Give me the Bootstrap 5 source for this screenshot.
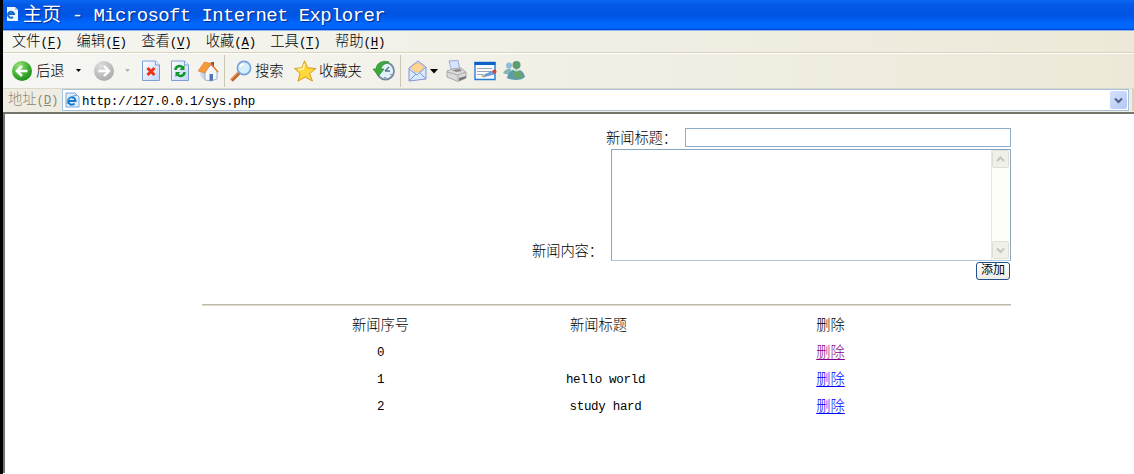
<!DOCTYPE html>
<html lang="zh-CN">
<head>
<meta charset="utf-8">
<title>主页</title>
<link href="https://cdn.jsdelivr.net/npm/bootstrap@5.3.0/dist/css/bootstrap.min.css" rel="stylesheet">
<style>
body{font-family:"Liberation Mono","Noto Sans CJK SC",monospace;font-size:14.3px;font-weight:300;line-height:20px;color:#000;background:#fff;height:474px;overflow:hidden}
.frame{border-left:3px solid #000;height:474px}
.en{font-family:"Liberation Mono",monospace;font-size:12.5px;letter-spacing:-.3px}
.titlebar{height:31px;padding-left:4px;color:#fff;background:linear-gradient(#0868f4 0,#0458e4 5px,#0054e3 15px,#0066fc 23px,#0067ff 28px,#0040c8 30px,#8db4ee 30px);font-size:19px;font-weight:400;text-shadow:1px 1px 1px #002a8c}
.titlebar .en{font-size:19px;letter-spacing:-.6px;white-space:pre}
.menus{height:22px;background:linear-gradient(90deg,#f5f5f1,#ece9d8);border-bottom:1px solid #d8d2bd;padding-left:9px;gap:14.2px;line-height:19px}
.menus>span{width:50.4px;padding-top:2px;white-space:nowrap}
.menus u{text-underline-offset:2px}
.tools{height:36px;background:linear-gradient(90deg,#f6f6f3,#ece9d8);border-top:1px solid #fff;border-bottom:1px solid #ddd9c9;padding-left:8px}
.tools svg,.tools span,.tools i{flex:none}
.tools span{line-height:20px;padding-top:1px;white-space:nowrap}
.sep{width:1px;height:32px;background:#c9c6b1}
.addr{height:23px;background:#efede2;padding-left:5px}
.addr label{width:54px;padding-top:2px;color:#8b897d;line-height:19px;white-space:nowrap;flex:none}
.url{height:22px;width:1067px;background:#fff;border:1px solid #a5c2dc;padding-left:2px;flex:none}
.drop{width:17px;height:18px;background:linear-gradient(135deg,#d5e1fc,#b4c8f6);border-radius:2px;margin-right:1px}
.grip{width:5px;height:22px;background:#fff;border-left:2px solid #d8d2bd;margin-left:3px}
.page-area{border-top:2px solid #77746b;border-left:2px solid #77746b;height:361px;padding:14px 0 0 197px}
.sheet{width:809px}
.caption-cell{width:80px;padding-left:1px;white-space:nowrap;letter-spacing:-.1px}
.title-in{width:326px;height:19px;border:1px solid #8eaccb;border-radius:0;padding:0 3px;background:#fff;outline:0;flex:none}
.box{width:400px;height:112px;border:1px solid #8aa5c0;border-bottom-color:#b4c6d9;flex:none}
.box textarea{border:0;resize:none;outline:0;overflow:hidden;background:#fff}
.scroller{width:19px;background:#fdfef8;border-left:1px solid #e8e8e2;flex:none}
.scroller svg{display:block}
.add{width:34px;height:18px;border:1px solid #24508a;border-radius:3px;background:linear-gradient(#fff,#ecebe4);font-size:12px;line-height:15px;padding:0;color:#000}
.rule{height:2px;background:linear-gradient(#bcb8aa 50%,#dfdbcf 50%);margin-top:24px}
.news{width:675px;margin:6px 0 0 66px;table-layout:fixed;text-align:center}
.news th,.news td{font-weight:300;padding:0;height:27.1px;line-height:20px;vertical-align:middle}
.news td.en{padding-top:1px}
.news a{color:#00f;text-underline-offset:2px;text-decoration-thickness:1px}
.news a.seen{color:#808}
</style>
</head>
<body>
<div class="frame">
  <header>
    <div class="titlebar d-flex align-items-center">
      <svg width="12" height="16" viewBox="0 0 12 16" style="margin-bottom:4px"><path d="M0 1h8l3 3v11H0z" fill="#eef5ff"/><path d="M8 1v3h3" fill="#a9c7ee"/><path d="M1 8h6a3 3 0 1 0-1 3" fill="none" stroke="#1769c8" stroke-width="2"/></svg>
      <span class="ms-1">主页</span><span class="en"> - Microsoft Internet Explorer</span>
    </div>
    <nav class="menus d-flex">
      <span>文件<span class="en">(<u>F</u>)</span></span><span>编辑<span class="en">(<u>E</u>)</span></span><span>查看<span class="en">(<u>V</u>)</span></span><span>收藏<span class="en">(<u>A</u>)</span></span><span>工具<span class="en">(<u>T</u>)</span></span><span>帮助<span class="en">(<u>H</u>)</span></span>
    </nav>
    <div class="tools d-flex align-items-center">
      <svg width="22" height="22" viewBox="0 0 22 22"><defs><radialGradient id="gr" cx=".35" cy=".25" r=".8"><stop offset="0" stop-color="#9be37a"/><stop offset=".6" stop-color="#3fb02f"/><stop offset="1" stop-color="#1d8a1b"/></radialGradient><radialGradient id="gy" cx=".35" cy=".25" r=".8"><stop offset="0" stop-color="#ddd"/><stop offset="1" stop-color="#aaa"/></radialGradient><linearGradient id="pg" x2="1" y2="1"><stop offset="0" stop-color="#fff"/><stop offset="1" stop-color="#bfd4fb"/></linearGradient></defs><circle cx="11" cy="11" r="10" fill="url(#gr)"/><path d="M16.500 11H6.500M11 6l-5 5 5 5" fill="none" stroke="#fff" stroke-width="2.600"/></svg>
      <span style="width:40px;margin-left:3px">后退</span>
      <svg width="6" height="4" viewBox="0 0 6 4"><path d="M0 0h5L2.500 3z"/></svg>
      <svg width="22" height="22" viewBox="0 0 22 22" style="margin-left:11px"><circle cx="11" cy="11" r="10" fill="url(#gy)"/><path d="M5.500 11h10M11 6l5 5-5 5" fill="none" stroke="#fff" stroke-width="2.400"/></svg>
      <svg width="6" height="4" viewBox="0 0 6 4" style="margin-left:10px"><path d="M0 0h5L2.500 3z" fill="#b5b5b0"/></svg>
      <svg width="18" height="22" viewBox="0 0 18 22" style="margin-left:11px"><path d="M.5 1h13l4 4v15.500H.5z" fill="url(#pg)" stroke="#7d9fd5"/><path d="M13.500 1v4h4" fill="#e5efff" stroke="#7d9fd5"/><path d="M5.500 8l7 7m0-7l-7 7" stroke="#ed3414" stroke-width="3"/></svg>
      <svg width="18" height="22" viewBox="0 0 18 22" style="margin-left:11px"><path d="M.5 1h13l4 4v15.500H.5z" fill="url(#pg)" stroke="#7d9fd5"/><path d="M13.500 1v4h4" fill="#e5efff" stroke="#7d9fd5"/><path d="M4.500 10c0-4 5-5 7-2.500M13.500 12c0 4-5 5-7 2.500" fill="none" stroke="#13962a" stroke-width="2.500"/><path d="M13.500 5v5h-5zM4.500 17v-5h5z" fill="#13962a"/></svg>
      <svg width="22" height="22" viewBox="0 0 22 22" style="margin-left:8px"><path d="M14 2h3v7h-3z" fill="#9b4d34"/><path d="M3.500 10v6l5 5V10l-3-2z" fill="#c8d6ef"/><path d="M8 11l6-6 6 6v8l-6 2-6-1z" fill="#f6f8fd" stroke="#8ba0c7" stroke-width=".8"/><path d="M12.500 14H16v6.500l-3.500.5z" fill="#5576b5"/><path d="M1 11L7.500 2 14 3.500 8 13z" fill="#f49a3b" stroke="#d8762b" stroke-width=".6"/><path d="M13 3l8 9" stroke="#e17b2d" stroke-width="1.500"/></svg>
      <i class="sep" style="margin-left:5px"></i>
      <svg width="22" height="22" viewBox="0 0 22 22" style="margin-left:5px"><path d="M1.500 20.500l8-8" stroke="#b9612f" stroke-width="3.600"/><path d="M1 19.500l8-8" stroke="#f09a4b" stroke-width="1.500"/><circle cx="14" cy="8" r="6.600" fill="#d5eefc" stroke="#78a2dd" stroke-width="1.700"/><path d="M10 7q1-3 4-3" fill="none" stroke="#fff" stroke-width="2"/></svg>
      <span style="width:38px;margin-left:3px">搜索</span>
      <svg width="23" height="22" viewBox="0 0 23 22" style="margin-left:1px"><path d="M10.500.8l3 7 8.500.7-6.500 5 3 7.500-7.500-4-7 4.200L6 13.500.6 8.500l7.400-.7z" fill="#ffd83b" stroke="#d99a17"/><path d="M10.500 4L9 9 4 9.500" fill="none" stroke="#fff8b5" stroke-width="1.500"/></svg>
      <span style="width:52px;margin-left:2px">收藏夹</span>
      <svg width="23" height="22" viewBox="0 0 23 22" style="margin-left:2px"><circle cx="12.500" cy="11" r="8.500" fill="#e2f0fa" stroke="#78899b" stroke-width="1.800"/><path d="M12 11l4-4M12 11h5M12 17v1M18 14v1" stroke="#56738e" stroke-width="1.300"/><path d="M16 2C9 0 3.500 3 3 9H0l5.500 7 5.500-7H8c0-3 3-5 8-7z" fill="#3fa83c" stroke="#23882a" stroke-width=".7"/></svg>
      <i class="sep" style="margin-left:4px"></i>
      <svg width="20" height="22" viewBox="0 0 20 22" style="margin-left:7px"><path d="M1 8l9-7 8 6v12L1 21z" fill="#d6eafc" stroke="#8b91cf"/><path d="M3 8q6-9 13-1l-4 5H7z" fill="#ffd493" stroke="#e7ad63" stroke-width=".6"/><path d="M1 9l8 6 9-8M1 21l7-7m4-1l6 6" fill="none" stroke="#8099d6"/></svg>
      <svg width="8" height="5" viewBox="0 0 8 5" style="margin-left:2px"><path d="M0 0h8L4 4.500z"/></svg>
      <svg width="22" height="22" viewBox="0 0 22 22" style="margin-left:8px"><path d="M3 1l9-.5 2 10-8 1z" fill="#d6e4ff" stroke="#98a8d8"/><path d="M1 11l5-2 9-1 5 4v6l-8 3.500L1 17z" fill="#dadada" stroke="#999" stroke-width=".8"/><path d="M1 12l11 3 8-3M12 15v6" fill="none" stroke="#aaa"/><path d="M6 10l8-1 2 2-6 1z" fill="#888"/><path d="M13 18l7-2v2l-7 3z" fill="#777"/></svg>
      <svg width="23" height="22" viewBox="0 0 23 22" style="margin-left:6px"><path d="M1 2.500h20v17H1z" fill="#f8fbff" stroke="#2a7bd1" stroke-width="1.400"/><path d="M.5 2h21v3H.5z" fill="#0a62c8"/><path d="M3 8.500h15M3 11.500h14M3 14.500h6" stroke="#9aa5b5"/><path d="M8 16l11-5 1 3-11 3z" fill="#71a8e3" stroke="#416ca8" stroke-width=".6"/><path d="M7 17l2-2 3 1z" fill="#e9b65e"/><circle cx="20.500" cy="11.500" r="2" fill="#d54132"/></svg>
      <svg width="23" height="22" viewBox="0 0 23 22" style="margin-left:6px"><circle cx="6" cy="5.500" r="3" fill="#8dbfdc"/><path d="M0 13q4-6 8-4l-1 5q-4 1-7-1z" fill="#81b6b5"/><circle cx="13.500" cy="5" r="4" fill="#5c9e71"/><path d="M4 18q1-5 5-8 4-1 8 0 4 2 5 7-3 3-9 3-6 0-9-2z" fill="#5c9bab"/><path d="M12 10q6 0 8 6-3 3-8 2-3-4 0-8z" fill="#68a56b"/><path d="M10 9.500q3.500 3 7 0" fill="none" stroke="#eef3ee"/></svg>
    </div>
    <div class="addr d-flex">
      <label>地址<span class="en">(<u>D</u>)</span></label>
      <div class="url d-flex align-items-center">
        <svg width="15" height="16" viewBox="0 0 15 16" class="flex-shrink-0"><path d="M1 1h9l4 4v10H1z" fill="#dfeeff" stroke="#7ba7da"/><path d="M3.500 9h7a3.700 3.700 0 1 0-1 2.500" fill="none" stroke="#1878c8" stroke-width="2"/><path d="M2 12Q2 5 12 3" fill="none" stroke="#4f9de0"/></svg>
        <span class="en" style="margin:4px 0 0 2px">http://127.0.0.1/sys.php</span>
        <div class="drop ms-auto d-flex align-items-center justify-content-center"><svg width="9" height="7" viewBox="0 0 9 7"><path d="M1 1.500l3.500 3.500L8 1.500" fill="none" stroke="#4d6185" stroke-width="2"/></svg></div>
      </div>
      <div class="grip"></div>
    </div>
  </header>
  <main class="page-area">
    <div class="sheet">
      <form onsubmit="return false">
        <div class="d-flex justify-content-end"><span class="caption-cell" style="line-height:23px;height:21px">新闻标题：</span><input class="title-in" type="text" aria-label="新闻标题"></div>
        <div class="d-flex justify-content-end align-items-end"><span class="caption-cell" style="line-height:18px">新闻内容：</span>
          <div class="box d-flex"><textarea class="flex-grow-1" aria-label="新闻内容"></textarea>
            <div class="scroller d-flex flex-column justify-content-between">
              <svg width="17" height="19" viewBox="0 0 17 19"><rect x=".5" y=".5" width="16" height="17" rx="1" fill="#f0f0ea" stroke="#deded2"/><path d="M5 11l3.500-3.500L12 11" fill="none" stroke="#c5c5bc" stroke-width="2"/></svg>
              <svg width="17" height="19" viewBox="0 0 17 19"><rect x=".5" y=".5" width="16" height="17" rx="1" fill="#f0f0ea" stroke="#deded2"/><path d="M5 7.500L8.500 11 12 7.500" fill="none" stroke="#c5c5bc" stroke-width="2"/></svg>
            </div>
          </div>
        </div>
        <div class="d-flex justify-content-end" style="padding:1px 1px 0 0"><button class="add">添加</button></div>
      </form>
      <div class="rule"></div>
      <table class="news">
        <tr><th>新闻序号</th><th style="padding-right:14px">新闻标题</th><th>删除</th></tr>
        <tr><td class="en">0</td><td></td><td><a class="seen" href="#">删除</a></td></tr>
        <tr><td class="en">1</td><td class="en">hello world</td><td><a href="#">删除</a></td></tr>
        <tr><td class="en">2</td><td class="en">study hard</td><td><a href="#">删除</a></td></tr>
      </table>
    </div>
  </main>
</div>
<script src="https://cdn.jsdelivr.net/npm/bootstrap@5.3.0/dist/js/bootstrap.bundle.min.js"></script>
</body>
</html>
